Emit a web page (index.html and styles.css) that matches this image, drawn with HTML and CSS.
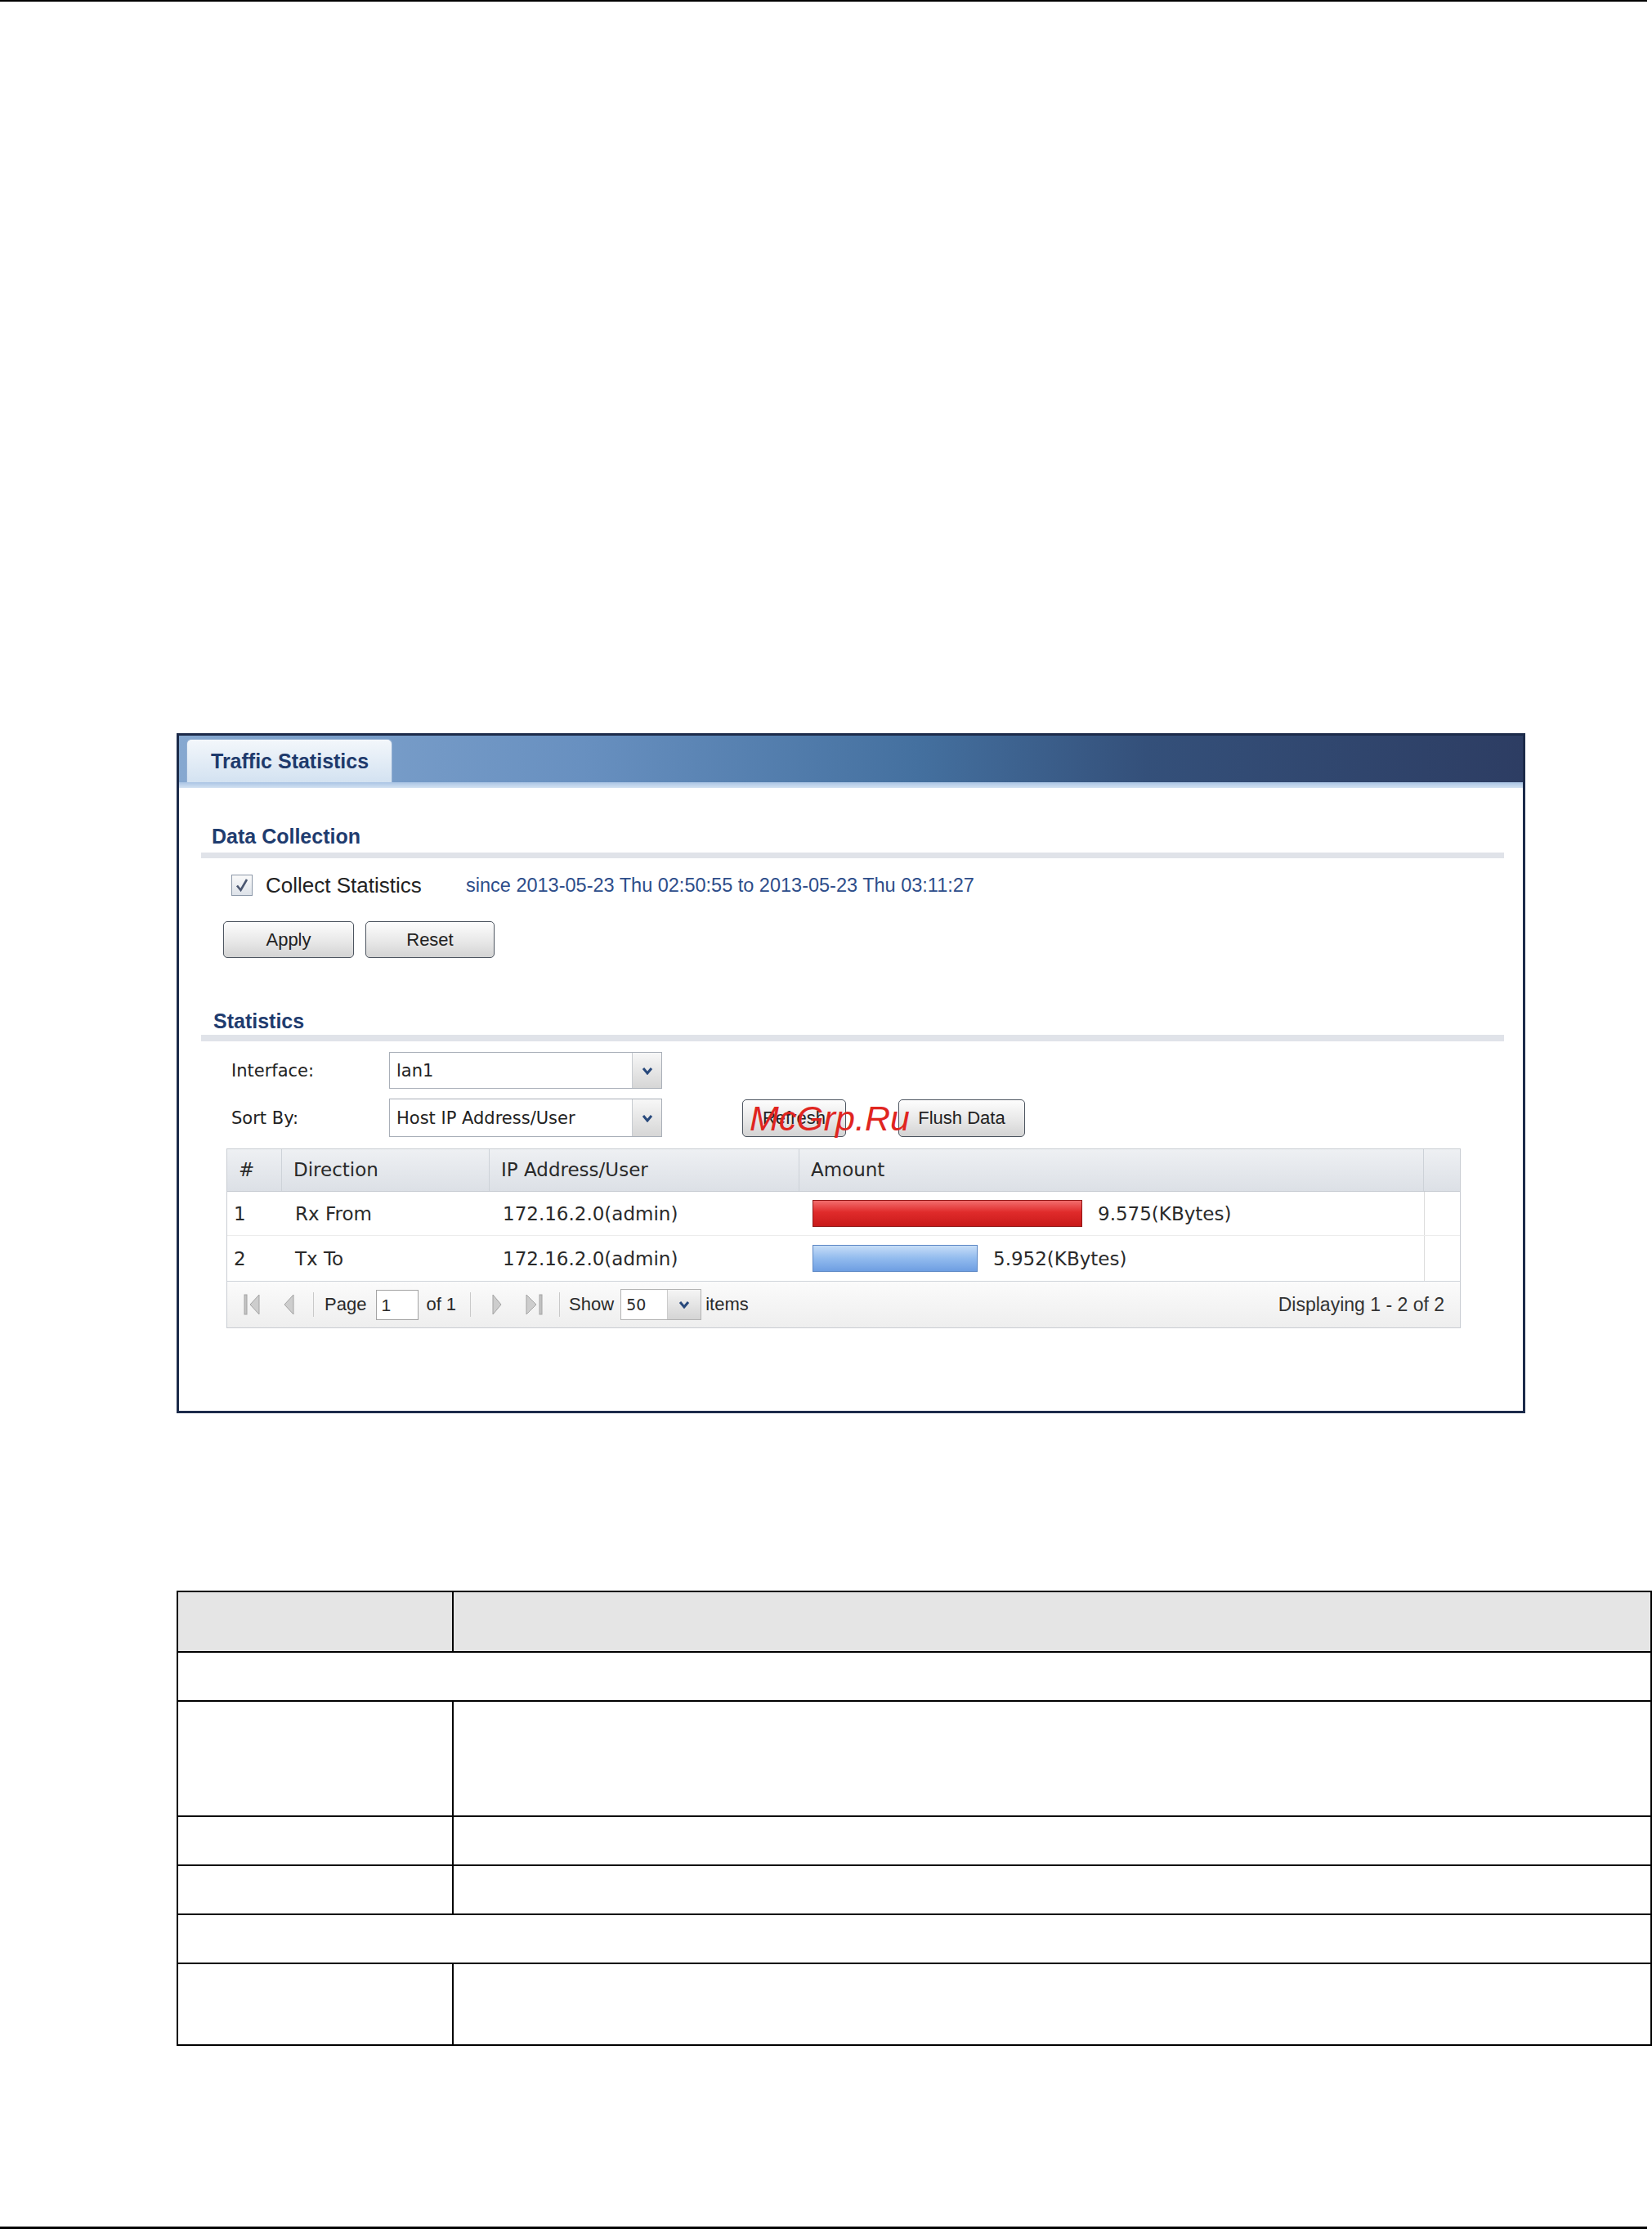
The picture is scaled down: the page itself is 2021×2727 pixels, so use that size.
FILE: index.html
```html
<!DOCTYPE html>
<html lang="en">
<head>
    <meta charset="UTF-8">
    <meta name="viewport" content="width=device-width, initial-scale=1.0">
    <title>Traffic Statistics</title>
    <link rel="stylesheet" href="styles.css">
</head>
<body>
    <div class="page-rule top"></div>

    <div class="panel">
        <div class="panel-head">
            <div class="tab">Traffic Statistics</div>
        </div>
        <div class="panel-stripe"></div>
        <div class="panel-body">
            <div class="section-title">Data Collection</div>
            <div class="section-rule"></div>
            <div class="check-row">
                <span class="checkbox">
                    <svg width="24" height="24" viewBox="0 0 24 24"><path d="M6 12.5 L10.5 18 L18 5" fill="none" stroke="#4a5670" stroke-width="2.6"/></svg>
                </span>
                <span class="check-label">Collect Statistics</span>
                <span class="since">since 2013-05-23 Thu 02:50:55 to 2013-05-23 Thu 03:11:27</span>
            </div>
            <div class="button-row">
                <button class="btn btn-apply">Apply</button>
                <button class="btn btn-reset">Reset</button>
            </div>

            <div class="section-title stats">Statistics</div>
            <div class="section-rule thick"></div>
            <div class="field-row">
                <span class="field-label">Interface:</span>
                <div class="select">
                    <span class="select-text">lan1</span>
                    <span class="select-arrow"><svg width="14" height="10" viewBox="0 0 14 10"><path d="M2 2 L7 8 L12 2" fill="none" stroke="#28497c" stroke-width="3"/></svg></span>
                </div>
            </div>
            <div class="field-row sort">
                <span class="field-label">Sort By:</span>
                <div class="select">
                    <span class="select-text">Host IP Address/User</span>
                    <span class="select-arrow"><svg width="14" height="10" viewBox="0 0 14 10"><path d="M2 2 L7 8 L12 2" fill="none" stroke="#28497c" stroke-width="3"/></svg></span>
                </div>
                <button class="btn btn-refresh">Refresh<span class="watermark">McGrp.Ru</span></button>
                <button class="btn btn-flush">Flush Data</button>
            </div>

            <div class="grid">
                <div class="grid-head">
                    <div class="cell">#</div>
                    <div class="cell">Direction</div>
                    <div class="cell">IP Address/User</div>
                    <div class="cell">Amount</div>
                    <div class="cell last"></div>
                </div>
                <div class="grid-row">
                    <div class="cell num">1</div>
                    <div class="cell">Rx From</div>
                    <div class="cell">172.16.2.0(admin)</div>
                    <div class="cell amount"><span class="bar red" style="width: 330px"></span><span class="bar-text">9.575(KBytes)</span></div>
                    <div class="cell last"></div>
                </div>
                <div class="grid-row second">
                    <div class="cell num">2</div>
                    <div class="cell">Tx To</div>
                    <div class="cell">172.16.2.0(admin)</div>
                    <div class="cell amount"><span class="bar blue" style="width: 202px"></span><span class="bar-text">5.952(KBytes)</span></div>
                    <div class="cell last"></div>
                </div>
                <div class="grid-foot">
                    <svg class="pg-first" width="21" height="26" viewBox="0 0 21 26"><rect x="1" y="1" width="3" height="24" fill="#c4c4c4" stroke="#a3a3a3"/><path d="M19 1 L19 25 L8 13 Z" fill="#cdcdcd" stroke="#a3a3a3"/></svg>
                    <svg class="pg-prev" width="16" height="26" viewBox="0 0 16 26"><path d="M14 1 L14 25 L3 13 Z" fill="#cdcdcd" stroke="#a3a3a3"/></svg>
                    <span class="pg-sep s1"></span>
                    <span class="pg-page">Page</span>
                    <span class="pg-input">1</span>
                    <span class="pg-of">of 1</span>
                    <span class="pg-sep s2"></span>
                    <svg class="pg-next" width="14" height="26" viewBox="0 0 14 26"><path d="M2 1 L2 25 L12 13 Z" fill="#cdcdcd" stroke="#a3a3a3"/></svg>
                    <svg class="pg-last" width="25" height="26" viewBox="0 0 25 26"><path d="M2 1 L2 25 L14 13 Z" fill="#cdcdcd" stroke="#a3a3a3"/><rect x="18" y="1" width="3" height="24" fill="#c4c4c4" stroke="#a3a3a3"/></svg>
                    <span class="pg-sep s3"></span>
                    <span class="pg-show">Show</span>
                    <div class="pg-select">
                        <span class="pg-select-text">50</span>
                        <span class="pg-select-arrow"><svg width="14" height="10" viewBox="0 0 14 10"><path d="M2 2 L7 8 L12 2" fill="none" stroke="#28497c" stroke-width="3"/></svg></span>
                    </div>
                    <span class="pg-items">items</span>
                    <span class="pg-display">Displaying 1 - 2 of 2</span>
                </div>
            </div>
        </div>
    </div>

    <table class="desc">
        <tr class="r-head"><td class="col-label"></td><td></td></tr>
        <tr class="r-60"><td colspan="2"></td></tr>
        <tr class="r-140"><td></td><td></td></tr>
        <tr class="r-60"><td></td><td></td></tr>
        <tr class="r-60"><td></td><td></td></tr>
        <tr class="r-60"><td colspan="2"></td></tr>
        <tr class="r-100"><td></td><td></td></tr>
    </table>

    <div class="page-rule bottom"></div>
</body>
</html>
```

FILE: styles.css
```css
body {
    margin: 0;
    font-family: "Liberation Sans", Arial, sans-serif;
    color: #222;
    background-color: #fff;
}
.page-rule {
    width: 2015px;
    background-color: #000;
}
.page-rule.top {
    height: 2px;
}
.page-rule.bottom {
    height: 3px;
    margin-top: 221px;
}

/* panel */
.panel {
    margin: 895px 0 0 216px;
    width: 1650px;
    height: 832px;
    box-sizing: border-box;
    border: 3px solid #1c2b4a;
    background-color: #fff;
}
.panel-head {
    height: 57px;
    box-sizing: border-box;
    padding-left: 9px;
    display: flex;
    align-items: flex-end;
    background: linear-gradient(to right, #86a8d0 0%, #6890c0 30%, #44709f 55%, #34507a 72%, #2d3d63 100%);
}
.tab {
    width: 252px;
    height: 53px;
    box-sizing: border-box;
    border: 1px solid #94b0d3;
    border-bottom: none;
    border-radius: 6px 6px 0 0;
    background: linear-gradient(#f3f7fb, #d3e2f1);
    padding-left: 29px;
    line-height: 52px;
    font-size: 25px;
    font-weight: bold;
    color: #1e3a6c;
}
.panel-stripe {
    height: 7px;
    background: linear-gradient(#a9c4e4, #d3e2f2);
}
.panel-body {
    padding: 0 23px 0 27px;
}
.section-title {
    margin-top: 44px;
    height: 30px;
    line-height: 30px;
    padding-left: 13px;
    font-size: 25px;
    font-weight: bold;
    color: #1f3c6f;
}
.section-title.stats {
    margin-top: 62px;
    padding-left: 15px;
}
.section-rule {
    height: 7px;
    margin-top: 5px;
    background-color: #e0e3e9;
}
.section-rule.thick {
    height: 8px;
    margin-top: 2px;
}

/* data collection */
.check-row {
    display: flex;
    align-items: center;
    height: 26px;
    margin-top: 20px;
    padding-left: 37px;
}
.checkbox {
    width: 26px;
    height: 26px;
    box-sizing: border-box;
    border: 1px solid #8c98a8;
    background: linear-gradient(#fafafa, #dde2e9);
    margin-right: 16px;
    display: flex;
    align-items: center;
    justify-content: center;
}
.check-label {
    width: 245px;
    font-size: 26px;
    color: #222;
}
.since {
    font-size: 23.5px;
    color: #2d4d8a;
}
.button-row {
    display: flex;
    gap: 14px;
    margin-top: 31px;
    padding-left: 27px;
}
.btn {
    height: 45px;
    box-sizing: border-box;
    padding: 0;
    border: 1px solid #4d5560;
    border-radius: 5px;
    background: linear-gradient(#fdfdfd, #e6e6e6 60%, #d3d3d3);
    font-family: "Liberation Sans", Arial, sans-serif;
    font-size: 22px;
    color: #222;
}
.btn-apply {
    width: 160px;
}
.btn-reset {
    width: 158px;
}

/* statistics */
.field-row {
    display: flex;
    align-items: center;
    height: 45px;
    margin-top: 13px;
    padding-left: 37px;
}
.field-row.sort {
    height: 47px;
    margin-top: 12px;
}
.field-label {
    width: 193px;
    font-family: "DejaVu Sans", Verdana, sans-serif;
    font-size: 21px;
    color: #222;
}
.select {
    width: 334px;
    height: 100%;
    box-sizing: border-box;
    border: 1px solid #a9afb8;
    background-color: #fff;
    display: flex;
}
.select-text {
    flex: 1;
    padding-left: 8px;
    display: flex;
    align-items: center;
    font-family: "DejaVu Sans", Verdana, sans-serif;
    font-size: 21px;
    color: #222;
}
.select-arrow {
    width: 35px;
    border-left: 1px solid #c8ccd1;
    background: linear-gradient(#f7f7f7, #d6d6d6);
    display: flex;
    align-items: center;
    justify-content: center;
}
.btn-refresh {
    position: relative;
    width: 127px;
    height: 46px;
    margin-left: 98px;
}
.btn-flush {
    width: 155px;
    height: 46px;
    margin-left: 64px;
}
.watermark {
    position: absolute;
    left: 8px;
    top: 50%;
    transform: translateY(-50%);
    font-size: 43px;
    font-style: italic;
    line-height: 1;
    color: #e0251f;
    white-space: nowrap;
}

/* grid */
.grid {
    margin: 14px 0 0 31px;
    width: 1508px;
    border: 1px solid #c9cdd3;
    font-family: "DejaVu Sans", Verdana, sans-serif;
    font-size: 23px;
    color: #2a2a2a;
}
.grid-head,
.grid-row {
    display: grid;
    grid-template-columns: 67px 254px 379px 764px 1fr;
}
.grid-head {
    height: 51px;
    background: linear-gradient(#eef0f3, #dce0e6);
    border-bottom: 1px solid #c4c9d0;
}
.grid-head .cell {
    line-height: 51px;
    padding-left: 14px;
    border-right: 1px solid #cdd2d8;
}
.grid-head .cell.last {
    border-right: none;
}
.grid-row {
    height: 53px;
    border-bottom: 1px solid #ececec;
}
.grid-row.second {
    height: 55px;
    border-bottom: none;
}
.grid-row .cell {
    display: flex;
    align-items: center;
    padding-left: 16px;
}
.grid-row .cell.num {
    padding-left: 8px;
}
.grid-row .cell.last {
    padding-left: 0;
    border-left: 1px solid #dcdcdc;
}
.bar {
    height: 33px;
    box-sizing: border-box;
}
.bar.red {
    border: 1px solid #8f1515;
    background: linear-gradient(#f26d6d, #e02b2b 45%, #c81a1a);
}
.bar.blue {
    border: 1px solid #5a86c4;
    background: linear-gradient(#c6ddf7, #92bbee 50%, #6e9ee2);
}
.bar-text {
    margin-left: 19px;
}

/* pager */
.grid-foot {
    height: 56px;
    display: flex;
    align-items: center;
    padding-right: 19px;
    border-top: 1px solid #cfd4da;
    background: linear-gradient(#fbfbfb, #eeeeee);
    font-family: "Liberation Sans", Arial, sans-serif;
    font-size: 22px;
    color: #2a2a2a;
}
.pg-first {
    margin-left: 20px;
}
.pg-prev {
    margin-left: 26px;
}
.pg-sep {
    width: 1px;
    height: 30px;
    background-color: #c9c9c9;
}
.pg-sep.s1 {
    margin-left: 22px;
}
.pg-sep.s2 {
    margin-left: 17px;
}
.pg-sep.s3 {
    margin-left: 17px;
}
.pg-page {
    margin-left: 13px;
}
.pg-input {
    width: 52px;
    height: 37px;
    box-sizing: border-box;
    margin-left: 12px;
    padding-left: 5px;
    border: 1px solid #a3a3a3;
    background-color: #fff;
    line-height: 35px;
    font-size: 21px;
}
.pg-of {
    margin-left: 9px;
}
.pg-next {
    margin-left: 25px;
}
.pg-last {
    margin-left: 27px;
}
.pg-show {
    margin-left: 11px;
}
.pg-select {
    width: 99px;
    height: 38px;
    box-sizing: border-box;
    margin-left: 8px;
    border: 1px solid #b3b3b3;
    background-color: #fff;
    display: flex;
}
.pg-select-text {
    flex: 1;
    padding-left: 6px;
    line-height: 36px;
    font-family: "DejaVu Sans", Verdana, sans-serif;
    font-size: 19px;
}
.pg-select-arrow {
    width: 40px;
    border-left: 1px solid #cccccc;
    background: linear-gradient(#f5f5f5, #d4d4d4);
    display: flex;
    align-items: center;
    justify-content: center;
}
.pg-items {
    margin-left: 5px;
}
.pg-display {
    margin-left: auto;
    font-size: 23px;
    color: #333;
}

/* description table */
.desc {
    margin: 217px 0 0 216px;
    width: 1805px;
    border-collapse: collapse;
}
.desc td {
    border: 2px solid #000;
    padding: 0;
}
.desc .col-label {
    width: 335px;
}
.desc .r-head td {
    height: 72px;
    background-color: #e5e5e5;
}
.desc .r-60 td {
    height: 58px;
}
.desc .r-140 td {
    height: 139px;
}
.desc .r-100 td {
    height: 98px;
}
```
